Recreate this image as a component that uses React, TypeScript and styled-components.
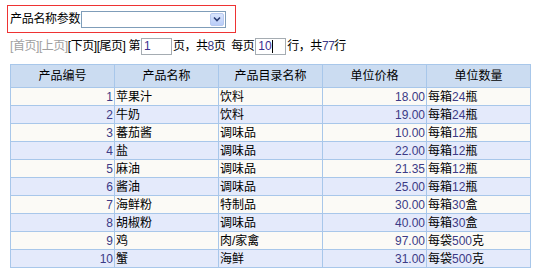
import React from "react";
import styled, { createGlobalStyle } from "styled-components";

const Global = createGlobalStyle`
  html, body { margin: 0; padding: 0; background: #fff; }
  body {
    font-family: "Liberation Sans", Arial, "Noto Sans CJK SC", sans-serif;
    font-size: 12px;
    color: #000;
  }
`;

const Page = styled.div`
  padding: 5px 0 0 7px;
  display: flex;
  flex-direction: column;
  align-items: flex-start;
`;

const FilterBox = styled.div`
  box-sizing: border-box;
  width: 229px;
  height: 28px;
  border: 1px solid #ee3333;
  display: flex;
  align-items: center;
  padding-left: 2px;
  gap: 1px;
`;

const Label = styled.span`
  line-height: 16px;
  white-space: nowrap;
  letter-spacing: -0.3px;
`;

const Select = styled.div`
  box-sizing: border-box;
  width: 145px;
  height: 17px;
  border: 1px solid #7f9db9;
  background: #fff;
  display: flex;
  justify-content: flex-end;
  align-items: stretch;
  padding: 1px;
`;

const DropButton = styled.div`
  width: 14px;
  box-sizing: border-box;
  border: 1px solid #b7c9ef;
  border-radius: 2px;
  background: linear-gradient(#d9e5fd, #b9cdf8);
  display: flex;
  align-items: center;
  justify-content: center;
`;

const Pager = styled.div`
  margin: 4px 0 0 3px;
  display: flex;
  align-items: center;
  height: 18px;
  white-space: pre;
  line-height: 16px;
  letter-spacing: -0.45px;
`;

const Link = styled.span<{ $disabled?: boolean }>`
  color: ${(p) => (p.$disabled ? "#a0a0a0" : "#000")};
`;

const Box = styled.span`
  box-sizing: border-box;
  display: inline-flex;
  align-items: center;
  width: 31px;
  height: 17px;
  border: 1px solid #a5acb2;
  padding-left: 2px;
  margin: 0 1px;
  color: #3c2f8f;
  background: #fff;
  letter-spacing: 0;
`;

const Caret = styled.span`
  display: inline-block;
  width: 1px;
  height: 13px;
  background: #000;
`;

const Num = styled.span`
  color: #3c3a86;
`;

const Table = styled.table`
  margin: 9px 0 0 3px;
  border-collapse: collapse;
  border: 1px solid #a8c7ea;
  table-layout: fixed;
  width: 521px;
`;

const Th = styled.th`
  height: 22px;
  padding: 0;
  border: 1px solid #a8c7ea;
  background: #cbdcf1;
  font-weight: normal;
  text-align: center;
  line-height: 16px;
`;

const Tr = styled.tr<{ $even: boolean }>`
  background: ${(p) => (p.$even ? "#e4eafb" : "#fbfaf6")};
`;

const Td = styled.td<{ $align: "left" | "right" }>`
  height: 17px;
  padding: 0 1px;
  border: 1px solid #a8c7ea;
  text-align: ${(p) => p.$align};
  line-height: 16px;
  white-space: nowrap;
  overflow: hidden;
`;

const rows = [
  [1, "苹果汁", "饮料", "18.00", "每箱", "24", "瓶"],
  [2, "牛奶", "饮料", "19.00", "每箱", "24", "瓶"],
  [3, "蕃茄酱", "调味品", "10.00", "每箱", "12", "瓶"],
  [4, "盐", "调味品", "22.00", "每箱", "12", "瓶"],
  [5, "麻油", "调味品", "21.35", "每箱", "12", "瓶"],
  [6, "酱油", "调味品", "25.00", "每箱", "12", "瓶"],
  [7, "海鲜粉", "特制品", "30.00", "每箱", "30", "盒"],
  [8, "胡椒粉", "调味品", "40.00", "每箱", "30", "盒"],
  [9, "鸡", "肉/家禽", "97.00", "每袋", "500", "克"],
  [10, "蟹", "海鲜", "31.00", "每袋", "500", "克"],
] as const;

export default function App() {
  return (
    <>
      <Global />
      <Page>
        <FilterBox>
          <Label>产品名称参数</Label>
          <Select>
            <DropButton>
              <svg width="8" height="6" viewBox="0 0 8 6">
                <path d="M1 1.5 L4 4.5 L7 1.5" fill="none" stroke="#2b3d73" strokeWidth="1.6" />
              </svg>
            </DropButton>
          </Select>
        </FilterBox>
        <Pager>
          <Link $disabled>[首页]</Link>
          <Link $disabled>[上页]</Link>
          <Link>[下页]</Link>
          <Link>[尾页]</Link>
          <span> 第</span>
          <Box>1</Box>
          <span>
            页，共<Num>8</Num>页  每页
          </span>
          <Box>
            10
            <Caret />
          </Box>
          <span>
            行，共<Num>77</Num>行
          </span>
        </Pager>
        <Table>
          <colgroup>
            <col span={5} style={{ width: "104px" }} />
          </colgroup>
          <thead>
            <tr>
              <Th>产品编号</Th>
              <Th>产品名称</Th>
              <Th>产品目录名称</Th>
              <Th>单位价格</Th>
              <Th>单位数量</Th>
            </tr>
          </thead>
          <tbody>
            {rows.map((r, i) => (
              <Tr key={r[0]} $even={i % 2 === 1}>
                <Td $align="right">
                  <Num>{r[0]}</Num>
                </Td>
                <Td $align="left">{r[1]}</Td>
                <Td $align="left">{r[2]}</Td>
                <Td $align="right">
                  <Num>{r[3]}</Num>
                </Td>
                <Td $align="left">
                  {r[4]}
                  <Num>{r[5]}</Num>
                  {r[6]}
                </Td>
              </Tr>
            ))}
          </tbody>
        </Table>
      </Page>
    </>
  );
}
